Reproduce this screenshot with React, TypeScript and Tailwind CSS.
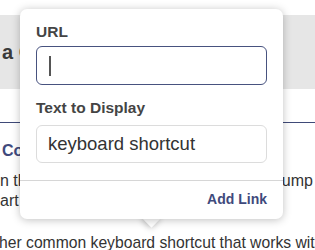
import React from "react";

export default function App() {
  return (
    <div className="relative h-[250px] w-[315px] overflow-hidden bg-white font-['Liberation_Sans',Arial,sans-serif] text-[#333]">
      {/* page behind the popover */}
      <div className="pt-[15px]">
        <div className="flex h-[74px] items-center bg-[#e6e6e6] pl-[2px] text-[20px] font-bold text-[#3a3a3a]">
          a Code Block
        </div>
        <div className="h-[34px] border-b border-[#3f4a78]" />
        <h3 className="mt-[18px] whitespace-nowrap pl-[2px] text-[16px] font-bold leading-[20px] text-[#3f4a7c]">
          Copy and Paste
        </h3>
        <div className="mt-[10px] text-[16px] leading-[20px] text-[#333]">
          <div className="flex justify-between whitespace-nowrap pr-[2px]">
            <span>n the editor you can</span>
            <span>jump</span>
          </div>
          <div className="whitespace-nowrap">art of the line</div>
          <div className="mt-[22px] -ml-[1px] whitespace-nowrap text-[15.7px]">
            her common keyboard shortcut that works with
          </div>
        </div>
      </div>

      {/* link popover */}
      <div className="absolute left-[20px] top-[9px] w-[263px]">
        <div className="absolute left-[125px] top-[203px] h-[13px] w-[13px] rotate-45 bg-white shadow-[0_1px_6px_rgba(0,0,0,0.28)]" />
        <div className="relative flex h-[210px] flex-col rounded-[7px] bg-white shadow-[0_1px_8px_rgba(0,0,0,0.25)]">
          <div className="px-[16px] pt-[14px]">
            <div className="text-[15.5px] font-bold leading-[18px] text-[#444]">URL</div>
            <div className="mt-[5px] flex h-[39px] items-center rounded-[6px] border border-[#47527f] pl-[12px]">
              <span className="h-[20px] w-[1.5px] bg-[#555]" />
            </div>
            <div className="mt-[14px] text-[15.5px] font-bold leading-[18px] text-[#444]">Text to Display</div>
            <div className="mt-[8px] flex h-[38px] items-center rounded-[6px] border border-[#dcdcdc] pl-[11px] text-[18.5px] text-[#333]">
              keyboard shortcut
            </div>
          </div>
          <div className="mt-[17px] border-t border-[#d6d6d6]" />
          <div className="flex flex-1 items-center justify-end px-[16px] pb-[2px]">
            <span className="text-[14px] font-bold text-[#3f4a7c]">Add Link</span>
          </div>
        </div>
      </div>
    </div>
  );
}
